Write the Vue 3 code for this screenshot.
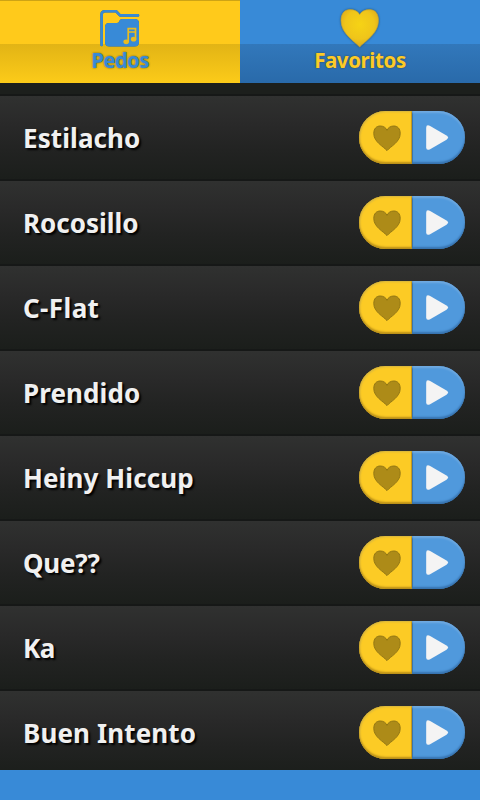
<template>
  <div class="app">
    <nav class="tabs">
      <button class="tab tab-sounds">
        <svg class="tab-icon" viewBox="0 0 40 40" width="40" height="40" aria-hidden="true">
          <path class="folder-line" d="M1.6 36V5.5Q1.6 2.2 5 2.2H16L20 6.4H38" />
          <path class="folder" d="M9 14H17Q19.2 14 19.2 12Q20 10 22.5 10H34.5Q39 10 39 14V33Q39 37.5 34.500 37.5H9.5Q5 37.5 5 33V18Q5 14 9 14Z" />
          <path class="note" d="M28.2 33V19.7H35.5V30.500M28.2 23H35.5" />
          <ellipse class="note-head" cx="26.2" cy="32.8" rx="2.8" ry="2.4" />
          <ellipse class="note-head" cx="33.6" cy="30.2" rx="2.7" ry="2.4" />
        </svg>
        <span class="tab-label label-sounds">Pedos</span>
      </button>
      <button class="tab tab-favorites">
        <svg class="tab-icon heart" viewBox="0 0 40 40" width="40" height="40" aria-hidden="true">
          <defs>
            <radialGradient id="gold" cx="50%" cy="40%" r="60%">
              <stop offset="0" stop-color="#f6d315" />
              <stop offset="0.65" stop-color="#efc51a" />
              <stop offset="1" stop-color="#dba91d" />
            </radialGradient>
          </defs>
          <path fill="url(#gold)" stroke="#c3a536" stroke-width="0.7" d="M19.7 38C15 32.5 1 25 1 11.5C1 4.5 4.5 0.6 10 0.6C14.5 0.6 18 2.5 19.7 5.5C21.5 2.5 25 0.6 29.5 0.6C35 0.6 38.5 4.5 38.5 11.5C38.5 25 24.5 32.5 19.7 38Z" />
        </svg>
        <span class="tab-label">Favoritos</span>
      </button>
    </nav>

    <main class="list">
      <div class="row row-cut"></div>
      <div v-for="sound in sounds" :key="sound.name" class="row">
        <span class="name" :style="{ letterSpacing: sound.spacing + 'px' }">{{ sound.name }}</span>
        <div class="actions">
          <button class="fav">
            <svg viewBox="0 0 28 27" width="28" height="27" aria-hidden="true">
              <path d="M14 25.600C10.500 21.500 0.800 17 0.800 8.600C0.800 3.500 3.500 1 7.200 1C10.300 1 13 2.600 14 5.300C15 2.600 17.700 1 20.800 1C24.500 1 27.200 3.500 27.200 8.600C27.200 17 17.500 21.500 14 25.600Z" />
            </svg>
          </button>
          <button class="play">
            <svg viewBox="0 0 24 28" width="24" height="28" aria-hidden="true">
              <path d="M1.2 3.8Q1.2 0.3 4.7 1.8L21.5 11.5Q24.6 13.6 21.5 15.7L4.7 25.4Q1.2 26.9 1.2 23.4Z" />
            </svg>
          </button>
        </div>
      </div>
    </main>

    <footer class="banner"></footer>
  </div>
</template>

<script setup>
const sounds = [
  { name: 'Estilacho', spacing: 0.1 },
  { name: 'Rocosillo', spacing: 0 },
  { name: 'C-Flat', spacing: 0.4 },
  { name: 'Prendido', spacing: 0.1 },
  { name: 'Heiny Hiccup', spacing: 0.1 },
  { name: 'Que??', spacing: -0.25 },
  { name: 'Ka', spacing: -0.5 },
  { name: 'Buen Intento', spacing: 0.12 },
]
</script>

<style>
body {
  margin: 0;
}
</style>

<style scoped>
.app {
  display: flex;
  flex-direction: column;
  width: 480px;
  height: 800px;
  overflow: hidden;
  background: #388ad7;
  font-family: "Noto Sans", "Open Sans", sans-serif;
  font-weight: 700;
}
button {
  padding: 0;
  border: none;
  font: inherit;
}
.tabs {
  display: flex;
  flex: 0 0 83px;
}
.tab {
  flex: 1;
  display: flex;
  flex-direction: column;
  align-items: center;
  box-sizing: border-box;
  padding-top: 9px;
}
.tab-sounds {
  color: #388ad7;
  background: linear-gradient(#ffca1b 44px, #e2b415 44px, #fccb19 83px);
  box-shadow: inset 0 1px #cea315;
}
.tab-favorites {
  color: #fccb27;
  background: linear-gradient(#388ad7 44px, #3278bb 44px, #296aaa 83px);
}
.tab-icon {
  display: block;
  flex: none;
  filter: drop-shadow(0 0 0.6px #4c6a62);
}
.heart {
  filter: drop-shadow(0 0 1px rgba(20, 60, 90, 0.7));
}
.tab-label {
  margin-top: -1px;
  font-size: 20.5px;
  line-height: 24px;
  letter-spacing: -0.4px;
  text-shadow: 0 0 2px rgba(50, 60, 40, 0.8);
}
.label-sounds {
  letter-spacing: -0.7px;
}
.folder-line {
  fill: none;
  stroke: #388ad7;
  stroke-width: 2.6;
  stroke-linecap: round;
  stroke-linejoin: round;
}
.folder {
  fill: #388ad7;
}
.note {
  fill: none;
  stroke: #eabb20;
  stroke-width: 1.7;
}
.note-head {
  fill: #eabb20;
}
.list {
  flex: 0 0 687px;
  overflow: hidden;
}
.row {
  display: flex;
  align-items: flex-start;
  justify-content: space-between;
  box-sizing: border-box;
  height: 85px;
  padding: 15px 15px 0 23px;
  border-bottom: 2px solid #161817;
  background: linear-gradient(#303130, #292929 35%, #222322 65%, #1b1e1b);
}
.row-cut {
  height: 13px;
  padding: 0;
  background: #1c1f1c;
}
.name {
  color: #f0f0f0;
  font-size: 26px;
  line-height: 54px;
  white-space: nowrap;
  text-shadow: 2px 2px 2px #000;
}
.actions {
  display: flex;
  width: 106px;
  height: 53px;
}
.actions button {
  flex: 0 0 53px;
  display: flex;
  align-items: center;
  box-sizing: border-box;
}
.actions .fav {
  justify-content: center;
  padding: 2px 0 0 3px;
  border-radius: 27px 0 0 27px;
  background: #fccb25;
  box-shadow: inset 0 -2px 2px #b98f18, inset 1px 1px 2px #d6b541, inset -1px 0 #c79c1d;
}
.fav path {
  fill: #ad8b18;
  stroke: #927614;
}
.actions .play {
  padding-left: 13px;
  border-radius: 0 27px 27px 0;
  background: #5099dc;
  box-shadow: inset 0 -2px 2px #3672ae, inset 0 2px 2px #70aae0, inset 1px 0 #2d639b;
}
.play path {
  fill: #f4f4f4;
}
</style>
